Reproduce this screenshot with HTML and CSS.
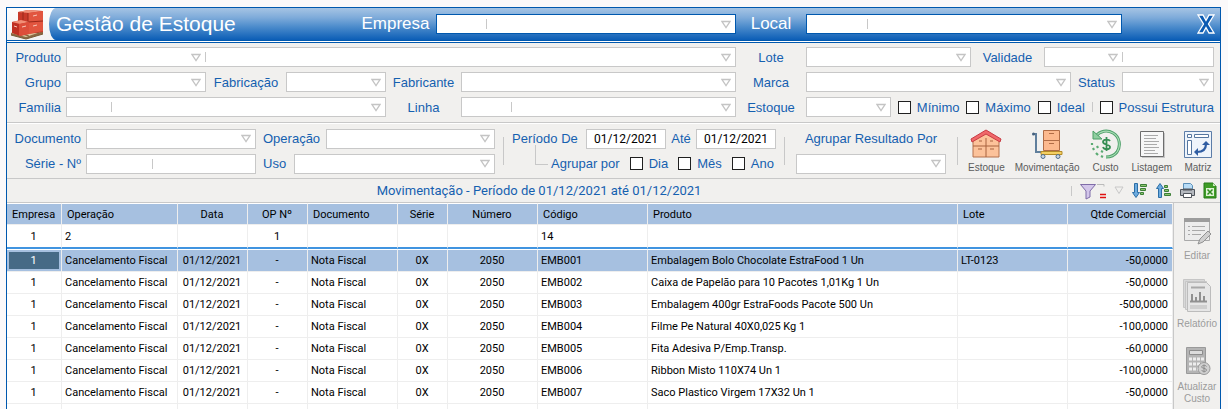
FILE: index.html
```html
<!DOCTYPE html>
<html lang="pt-BR">
<head>
    <meta charset="UTF-8">
    <meta name="viewport" content="width=device-width, initial-scale=1.0">
    <title>Gestão de Estoque</title>
    <link rel="stylesheet" href="styles.css">
</head>
<body>
    <div class="window">
        <header class="titlebar">
            <div class="logo">
                <svg width="36" height="32" viewBox="0 0 36 32">
                    <path d="M2 25l9-3 23 1v3l-17 5-15-4z" fill="#8a6a44"/>
                    <path d="M2 25l9-3 23 1-17 6z" fill="#e2c9a0"/>
                    <path d="M6 24l14 4M25 23l5 2M2 27l15 4 17-5" fill="none" stroke="#7a5a34"/>
                    <path d="M9 4l10-2 15 1v21l-15 2-10-3z" fill="#c83a2a"/>
                    <path d="M9 4l10-2 15 1-14 2z" fill="#f09078"/>
                    <path d="M19 5l15-2v20l-15 3z" fill="#e2553f"/>
                    <path d="M19 14l15-1M19 5v11M9 13l10 1M14 4v8" stroke="#98281a" fill="none"/>
                    <path d="M3 14l9-2 8 2v12l-9 2-8-3z" fill="#bf2f22"/>
                    <path d="M3 14l9-2 8 2-9 2z" fill="#f28f76"/>
                    <path d="M10 16l10-2v12l-10 2z" fill="#dd4d39"/>
                    <path d="M5 18l3 1M24 8l4-1M24 18l4-1M13 19l4-1" stroke="#f8c8ba"/>
                </svg>
            </div>
            <div class="title-fill">
                <h1>Gestão de Estoque</h1>
                <label for="empresa">Empresa</label>
                <div class="field">
                    <input class="w-code" type="text" id="empresa">
                    <span class="bar"></span>
                    <select aria-label="Nome da empresa"><option></option></select>
                </div>
                <label for="local">Local</label>
                <div class="field">
                    <input class="w-code-lg" type="text" id="local">
                    <span class="bar"></span>
                    <select aria-label="Nome do local"><option></option></select>
                </div>
                <button class="close" type="button" aria-label="Fechar">
                    <svg width="18" height="20" viewBox="0 0 18 20">
                        <path d="M1 1h5l3 5.500 3-5.500h5l-5.500 9 5.500 9h-5l-3-5.500-3 5.500h-5l5.500-9z" fill="#0a5ab2" stroke="#fff" stroke-width="1.300"/>
                    </svg>
                </button>
            </div>
        </header>

        <section class="filters">
            <label class="end" for="produto">Produto</label>
            <div class="field span-5">
                <select class="w-product" id="produto"><option></option></select>
                <span class="bar"></span>
                <select aria-label="Nome do produto"><option></option></select>
            </div>
            <label for="lote">Lote</label>
            <div class="line">
                <div class="field grow"><select id="lote"><option></option></select></div>
                <label class="w-validade" for="validade">Validade</label>
                <div class="field w-expiry">
                    <select class="w-date" id="validade"><option></option></select>
                    <span class="bar"></span>
                    <input type="text" aria-label="Data de validade">
                </div>
            </div>

            <label class="end" for="grupo">Grupo</label>
            <div class="field"><select id="grupo"><option></option></select></div>
            <label for="fabricacao">Fabricação</label>
            <div class="field"><select id="fabricacao"><option></option></select></div>
            <label for="fabricante">Fabricante</label>
            <div class="field"><select id="fabricante"><option></option></select></div>
            <label for="marca">Marca</label>
            <div class="line">
                <div class="field grow"><select id="marca"><option></option></select></div>
                <label class="w-status" for="status">Status</label>
                <div class="field w-state"><select id="status"><option></option></select></div>
            </div>

            <label class="end" for="familia">Família</label>
            <div class="field span-3">
                <input class="w-code-sm" type="text" id="familia">
                <span class="bar"></span>
                <select aria-label="Nome da família"><option></option></select>
            </div>
            <label for="linha">Linha</label>
            <div class="field">
                <input class="w-code" type="text" id="linha">
                <span class="bar"></span>
                <select aria-label="Nome da linha"><option></option></select>
            </div>
            <label for="estoque">Estoque</label>
            <div class="line checks">
                <div class="field w-stock"><select id="estoque"><option></option></select></div>
                <label class="check"><input type="checkbox">Mínimo</label>
                <label class="check"><input type="checkbox">Máximo</label>
                <label class="check"><input type="checkbox">Ideal</label>
                <span class="bar"></span>
                <label class="check"><input type="checkbox">Possui Estrutura</label>
            </div>
        </section>

        <section class="options">
            <div class="docs">
                <label class="end" for="documento">Documento</label>
                <div class="field"><select id="documento"><option></option></select></div>
                <div class="line">
                    <label class="start w-oper" for="operacao">Operação</label>
                    <div class="field grow"><select id="operacao"><option></option></select></div>
                </div>
                <label class="end" for="serie">Série - Nº</label>
                <div class="field">
                    <input class="w-serie" type="text" id="serie">
                    <span class="bar"></span>
                    <input type="text" aria-label="Número">
                </div>
                <div class="line">
                    <label class="start w-uso" for="uso">Uso</label>
                    <div class="field grow"><select id="uso"><option></option></select></div>
                </div>
            </div>

            <span class="divider"></span>

            <div class="period">
                <div class="line">
                    <label class="start w-period" for="de">Período De</label>
                    <div class="field date"><input type="text" id="de" value="01/12/2021"></div>
                    <label class="w-ate" for="ate">Até</label>
                    <div class="field date"><input type="text" id="ate" value="01/12/2021"></div>
                </div>
                <div class="line group-by">
                    <span class="elbow"></span>
                    <span class="text">Agrupar por</span>
                    <label class="check"><input type="checkbox">Dia</label>
                    <label class="check"><input type="checkbox">Mês</label>
                    <label class="check"><input type="checkbox">Ano</label>
                </div>
            </div>

            <span class="divider"></span>

            <div class="group-result">
                <label for="agrupar">Agrupar Resultado Por</label>
                <div class="field"><select id="agrupar"><option></option></select></div>
            </div>

            <span class="divider"></span>

            <nav class="views">
                <button type="button">
                    <svg width="32" height="30" viewBox="0 0 32 30">
                        <path d="M3 10L16 3l13 7v18H3z" fill="#fcc29a" stroke="#b4704c"/>
                        <path d="M3 17h26M16 17v11M16 9v8M8 20h4M20 20h4M9 12h3M20 12h3" stroke="#a8623e" fill="none"/>
                        <path d="M1 10L16 1l15 9-1 3-14-8L2 13z" fill="#f0686a" stroke="#c83c44"/>
                    </svg>
                    Estoque
                </button>
                <button type="button">
                    <svg width="32" height="30" viewBox="0 0 32 30">
                        <path d="M2 5h3v18h5" fill="none" stroke="#607f9c" stroke-width="2"/>
                        <circle cx="2.500" cy="5" r="1.500" fill="#45617e"/>
                        <path d="M12.500 1.500h16v10h-16zM12.500 11.500h16v10h-16z" fill="#fcb98e" stroke="#b06c46"/>
                        <path d="M18 4.500h5M18 14.500h5" stroke="#b06c46"/>
                        <path d="M10 22.500h21v3H10z" fill="#f4cf62" stroke="#b38b28"/>
                        <circle cx="12" cy="27.500" r="2" fill="#cbd7e4" stroke="#4f6e8c"/>
                        <circle cx="27" cy="27.500" r="2" fill="#cbd7e4" stroke="#4f6e8c"/>
                    </svg>
                    Movimentação
                </button>
                <button type="button">
                    <svg width="32" height="30" viewBox="0 0 32 30">
                        <path d="M6 7C10 2 17 .500 23 4c7 4 8 13 4 19-3 4-7 5-11 5" fill="none" stroke="#4b9f67" stroke-width="3"/>
                        <path d="M6 7C10 2 17 .500 23 4c7 4 8 13 4 19-3 4-7 5-11 5" fill="none" stroke="#a8dab4" stroke-width="1.200"/>
                        <path d="M3 2v8h9z" fill="#8fce9f" stroke="#4b9f67"/>
                        <path d="M2 14v2M3 19l1 2M6 24l2 2M11 27l2 1M7 17l1 2M11 22l2 1" stroke="#5aaa72" stroke-width="2.200"/>
                        <path d="M20 12c-1-2-7-2-7 1s7 2 7 5-6 3-7 0M16.500 8v14" fill="none" stroke="#368e54" stroke-width="1.800"/>
                    </svg>
                    Custo
                </button>
                <button type="button">
                    <svg width="32" height="30" viewBox="0 0 32 30">
                        <path d="M6 4h23v25H6z" fill="#c7c7c7"/>
                        <path d="M4.500 2.500h23v25h-23z" fill="#f7f7f7" stroke="#6d6d6d"/>
                        <path d="M8 6.500h14M8 9.500h12M8 12.500h15M8 15.500h13M8 18.500h15M8 21.500h11M8 24.500h14" stroke="#aaa"/>
                    </svg>
                    Listagem
                </button>
                <button type="button">
                    <svg width="32" height="30" viewBox="0 0 32 30">
                        <path d="M2.500 2.500h27v26h-27z" fill="#eef4fb" stroke="#5c7da8"/>
                        <path d="M5.500 5.500h4v3h-4zM12.500 5.500h14v3h-14zM5.500 11.500h4v14h-4z" fill="#fff" stroke="#55769f"/>
                        <path d="M15 23c6 0 9-3 9-8" fill="none" stroke="#2f5da3" stroke-width="2.200"/>
                        <path d="M20 16l4-4 4 4zM16 19l-4 4 4 4z" fill="#2f5da3"/>
                    </svg>
                    Matriz
                </button>
            </nav>
        </section>

        <div class="toolbar">
            <h2>Movimentação - Período de 01/12/2021 até 01/12/2021</h2>
            <div class="tools">
                <span class="bar"></span>
                <button type="button" aria-label="Filtrar">
                    <svg width="28" height="18" viewBox="0 0 28 18">
                        <path d="M1.500 2.500h15L11 9v6l-4 2V9z" fill="#d3c6ea" stroke="#7f6ca8"/>
                        <path d="M18 2.500h7v2" fill="none" stroke="#bbb"/>
                        <path d="M21 12.500h6M21 15.500h6" stroke="#e01010" stroke-width="1.500"/>
                    </svg>
                </button>
                <button type="button" aria-label="Mais filtros">
                    <svg width="10" height="9" viewBox="0 0 10 9">
                        <path d="M1 1h8L5 7.500z" fill="none" stroke="#c8c8c8"/>
                    </svg>
                </button>
                <button type="button" aria-label="Ordem decrescente">
                    <svg width="17" height="17" viewBox="0 0 17 17">
                        <path d="M3.500 1.500h3v9h2L5 15.500 1.500 10.500h2z" fill="#6cabdf" stroke="#2c6ea6"/>
                        <path d="M9.500 2.500h6v2h-6zM9.500 6.500h5v2h-5zM9.500 10.500h3v2h-3z" fill="#8cc56c" stroke="#3d7f38"/>
                    </svg>
                </button>
                <button type="button" aria-label="Ordem crescente">
                    <svg width="17" height="17" viewBox="0 0 17 17">
                        <path d="M3.500 15.500h3v-9h2L5 1.500 1.500 6.500h2z" fill="#6cabdf" stroke="#2c6ea6"/>
                        <path d="M9.500 3.500h3v2h-3zM9.500 7.500h4v2h-4zM9.500 11.500h6v2h-6z" fill="#8cc56c" stroke="#3d7f38"/>
                    </svg>
                </button>
                <button type="button" aria-label="Imprimir">
                    <svg width="17" height="17" viewBox="0 0 17 17">
                        <path d="M4.500 1.500h7l2 2v5h-9z" fill="#b8dcf6" stroke="#5b8fb8"/>
                        <path d="M1.500 7.500h14v6h-14z" fill="#b4b8be" stroke="#50555c"/>
                        <path d="M4 7.500h9" stroke="#50555c" stroke-width="2"/>
                        <path d="M4.500 11.500h8v4h-8z" fill="#fff" stroke="#50555c"/>
                    </svg>
                </button>
                <button type="button" aria-label="Exportar para Excel">
                    <svg width="14" height="17" viewBox="0 0 14 17">
                        <path d="M1 1h9l3 3v12H1z" fill="#3f9c26" stroke="#267a18"/>
                        <path d="M10 1v3h3z" fill="#c9e8bc"/>
                        <path d="M3 6h8v8H3z" fill="#dff2d6"/>
                        <path d="M4.500 7.500l5 5M9.500 7.500l-5 5" stroke="#2f8c1c" stroke-width="1.500"/>
                    </svg>
                </button>
            </div>
        </div>

        <main class="content">
            <div class="grid-wrap">
                <table class="grid">
                    <colgroup>
                        <col class="c-emp"><col class="c-oper"><col class="c-data"><col class="c-op">
                        <col class="c-doc"><col class="c-serie"><col class="c-num"><col class="c-cod">
                        <col><col class="c-lote"><col class="c-qtde">
                    </colgroup>
                    <thead>
                        <tr class="heads">
                            <th class="mid">Empresa</th><th>Operação</th><th class="mid">Data</th><th class="mid">OP Nº</th>
                            <th>Documento</th><th class="mid">Série</th><th class="mid">Número</th><th>Código</th>
                            <th>Produto</th><th>Lote</th><th class="num">Qtde Comercial</th>
                        </tr>
                        <tr class="search">
                            <td class="mid"><input type="text" value="1" aria-label="Filtrar empresa"></td>
                            <td><input type="text" value="2" aria-label="Filtrar operação"></td>
                            <td><input type="text" aria-label="Filtrar data"></td>
                            <td class="mid"><input type="text" value="1" aria-label="Filtrar OP"></td>
                            <td><input type="text" aria-label="Filtrar documento"></td>
                            <td><input type="text" aria-label="Filtrar série"></td>
                            <td><input type="text" aria-label="Filtrar número"></td>
                            <td><input type="text" value="14" aria-label="Filtrar código"></td>
                            <td><input type="text" aria-label="Filtrar produto"></td>
                            <td><input type="text" aria-label="Filtrar lote"></td>
                            <td><input type="text" aria-label="Filtrar quantidade"></td>
                        </tr>
                    </thead>
                    <tbody>
                        <tr class="selected"><td class="mid current">1</td><td>Cancelamento Fiscal</td><td class="mid">01/12/2021</td><td class="mid">-</td><td>Nota Fiscal</td><td class="mid">0X</td><td class="mid">2050</td><td>EMB001</td><td>Embalagem Bolo Chocolate EstraFood 1 Un</td><td>LT-0123</td><td class="num">-50,0000</td></tr>
                        <tr><td class="mid">1</td><td>Cancelamento Fiscal</td><td class="mid">01/12/2021</td><td class="mid">-</td><td>Nota Fiscal</td><td class="mid">0X</td><td class="mid">2050</td><td>EMB002</td><td>Caixa de Papelão para 10 Pacotes 1,01Kg 1 Un</td><td></td><td class="num">-50,0000</td></tr>
                        <tr><td class="mid">1</td><td>Cancelamento Fiscal</td><td class="mid">01/12/2021</td><td class="mid">-</td><td>Nota Fiscal</td><td class="mid">0X</td><td class="mid">2050</td><td>EMB003</td><td>Embalagem 400gr EstraFoods Pacote 500 Un</td><td></td><td class="num">-500,0000</td></tr>
                        <tr><td class="mid">1</td><td>Cancelamento Fiscal</td><td class="mid">01/12/2021</td><td class="mid">-</td><td>Nota Fiscal</td><td class="mid">0X</td><td class="mid">2050</td><td>EMB004</td><td>Filme Pe Natural 40X0,025 Kg 1</td><td></td><td class="num">-100,0000</td></tr>
                        <tr><td class="mid">1</td><td>Cancelamento Fiscal</td><td class="mid">01/12/2021</td><td class="mid">-</td><td>Nota Fiscal</td><td class="mid">0X</td><td class="mid">2050</td><td>EMB005</td><td>Fita Adesiva P/Emp.Transp.</td><td></td><td class="num">-60,0000</td></tr>
                        <tr><td class="mid">1</td><td>Cancelamento Fiscal</td><td class="mid">01/12/2021</td><td class="mid">-</td><td>Nota Fiscal</td><td class="mid">0X</td><td class="mid">2050</td><td>EMB006</td><td>Ribbon Misto 110X74 Un 1</td><td></td><td class="num">-100,0000</td></tr>
                        <tr><td class="mid">1</td><td>Cancelamento Fiscal</td><td class="mid">01/12/2021</td><td class="mid">-</td><td>Nota Fiscal</td><td class="mid">0X</td><td class="mid">2050</td><td>EMB007</td><td>Saco Plastico Virgem 17X32 Un 1</td><td></td><td class="num">-50,0000</td></tr>
                        <tr><td></td><td></td><td></td><td></td><td></td><td></td><td></td><td></td><td></td><td></td><td></td></tr>
                    </tbody>
                </table>
            </div>

            <aside class="actions">
                <button type="button">
                    <svg width="28" height="28" viewBox="0 0 28 28">
                        <path d="M1.500 1.500h25v22h-25z" fill="#ececec" stroke="#a9a9a9"/>
                        <path d="M1 1h26v4H1z" fill="#9c9c9c"/>
                        <path d="M5 9.500h2M5 13.500h2M5 17.500h2M9 9.500h13M9 13.500h13M9 17.500h9" stroke="#a9a9a9"/>
                        <path d="M15 27l2-5 8-8 3 3-8 8z" fill="#cfcfcf" stroke="#929292"/>
                    </svg>
                    Editar
                </button>
                <button type="button">
                    <svg width="30" height="35" viewBox="0 0 30 35">
                        <path d="M1.500 1.500h21v28h-21z" fill="#d8d8d8" stroke="#c6c6c6"/>
                        <path d="M3.500 3.500h21v28h-21z" fill="#dedede" stroke="#c6c6c6"/>
                        <path d="M5.500 4.500h19l4 4v25h-23z" fill="#e6e6e6" stroke="#bcbcbc"/>
                        <path d="M9 9.500h14" stroke="#a8a8a8" stroke-width="2"/>
                        <path d="M10 23v-7M14 23v-4M18 23v-9M22 23v-5M8 23.500h17" stroke="#909090" stroke-width="2"/>
                        <path d="M8 27h17v4H8z" fill="#cfcfcf"/>
                    </svg>
                    Relatório
                </button>
                <button type="button">
                    <svg width="28" height="30" viewBox="0 0 28 30">
                        <path d="M3.500 1.500h19v26h-19z" fill="#b4b4b4" stroke="#9a9a9a"/>
                        <path d="M6.500 4.500h13v4h-13z" fill="#dcdcdc" stroke="#8d8d8d"/>
                        <path d="M6 13h15M6 18h15M6 23h15" stroke="#ededed" stroke-width="3" stroke-dasharray="3 1"/>
                        <circle cx="21" cy="22.500" r="6" fill="#d0d0d0" stroke="#989898"/>
                        <path d="M23.500 20.500c-1-2-5-1-5 .500s5 1 5 3-4 2-5 0M21 18.500v8" fill="none" stroke="#8a8a8a"/>
                    </svg>
                    Atualizar Custo
                </button>
            </aside>
        </main>
    </div>
</body>
</html>
```

FILE: styles.css
```css
:root {
    --page: #fbf9fa;
    --panel: #f1f0ee;
    --blue: #0058ae;
    --label: #1560b0;
    --line: #c8c8c8;
    --head: #a6c0e0;
    --grid-line: #eeeeee;
}

* {
    margin: 0;
    padding: 0;
    box-sizing: border-box;
}

body {
    background: var(--page);
    font-family: "Liberation Sans", Arial, sans-serif;
    font-size: 13px;
    color: var(--label);
    height: 100vh;
    padding: 7px 7px 0 6px;
    overflow: hidden;
}

button {
    background: none;
    border: none;
    font: inherit;
    color: inherit;
    cursor: pointer;
}

svg {
    display: block;
}

.window {
    height: 100%;
    display: flex;
    flex-direction: column;
    background: var(--panel);
    border: 1px solid var(--blue);
    border-bottom: none;
}

/* Title bar */
.titlebar {
    display: flex;
    height: 35px;
    flex: none;
    background: linear-gradient(#fdfdfd, #f1f1f1);
    border-bottom: 1px solid var(--blue);
    box-shadow: inset 0 -1px #ffffff, inset 0 -2px var(--blue);
    padding-bottom: 2px;
}

.logo {
    width: 42px;
    padding-left: 2px;
}

.title-fill {
    flex: 1;
    display: grid;
    grid-template-columns: 306fr 81px 300fr 70px 316fr 98px;
    align-items: center;
    background: linear-gradient(#a6c4e4, #7eabda 30%, #4a8acb 60%, #0b5db6);
    border-radius: 7px 0 0 7px / 16px 0 0 16px;
}

.title-fill h1 {
    font-size: 21px;
    font-weight: 400;
    color: #ffffff;
    padding-left: 7px;
    white-space: nowrap;
}

.title-fill label {
    font-size: 17px;
    color: #ffffff;
    text-align: center;
}

.title-fill .field {
    border-color: var(--blue);
}

.close {
    justify-self: end;
    padding-right: 5px;
}

/* Fields */
.field {
    display: flex;
    align-items: center;
    height: 20px;
    min-width: 0;
    background: #ffffff;
    border: 1px solid var(--line);
}

.field input,
.field select {
    flex: 1;
    min-width: 0;
    width: 0;
    height: 18px;
    border: none;
    outline: none;
    background: transparent;
    font-family: Roboto, sans-serif;
    font-size: 12px;
    color: #000000;
}

.field select {
    appearance: none;
    background: url("data:image/svg+xml,%3Csvg xmlns='http://www.w3.org/2000/svg' width='10' height='9'%3E%3Cpath d='M1 1.500h8L5 7.500z' fill='none' stroke='%23c4c4c4' stroke-width='1.300'/%3E%3C/svg%3E") no-repeat right 4px center;
}

.bar {
    flex: none;
    width: 1px;
    height: 10px;
    background: var(--line);
}

.field .w-code {
    flex: 0 0 49px;
}

.field .w-code-sm {
    flex: 0 0 44px;
}

.field .w-code-lg {
    flex: 0 0 60px;
}

.field .w-serie {
    flex: 0 0 65px;
}

.field .w-product {
    flex: 0 0 138px;
}

.field .w-date {
    flex: 0 0 77px;
}

label {
    text-align: center;
    white-space: nowrap;
}

.end {
    text-align: right;
    padding-right: 5px;
}

.start {
    text-align: left;
}

.line {
    display: flex;
    align-items: center;
    min-width: 0;
}

.grow {
    flex: 1;
}

.check {
    display: flex;
    align-items: center;
    gap: 6px;
}

.check input {
    appearance: none;
    width: 13px;
    height: 13px;
    background: #ffffff;
    border: 1px solid #202020;
}

.check input:checked {
    background: var(--blue);
}

/* Product filters */
.filters {
    display: grid;
    grid-template-columns: 59px 140fr 80px 100fr 75px 275fr 70px 408fr;
    row-gap: 5px;
    align-items: center;
    padding: 4px 6px 5px 0;
    border-bottom: 1px solid var(--line);
}

.span-3 {
    grid-column: span 3;
}

.span-5 {
    grid-column: span 5;
}

.w-validade {
    width: 73px;
}

.w-expiry {
    width: 170px;
}

.w-status {
    width: 51px;
}

.w-state {
    width: 92px;
}

.w-stock {
    width: 85px;
}

.checks {
    justify-content: space-between;
}

/* Document, period and grouping options */
.options {
    display: flex;
    align-items: center;
    height: 56px;
    flex: none;
    border-top: 1px solid #ffffff;
    border-bottom: 1px solid var(--line);
}

.docs {
    flex: 1;
    display: grid;
    grid-template-columns: 79px 170fr 239fr;
    row-gap: 5px;
    align-items: center;
}

.docs .line {
    padding-left: 7px;
}

.w-oper {
    width: 63px;
}

.w-uso {
    width: 31px;
}

.divider {
    width: 1px;
    height: 28px;
    margin: 0 8px;
    background: var(--line);
}

.period {
    display: grid;
    row-gap: 5px;
}

.period .line {
    height: 20px;
}

.w-period {
    width: 74px;
}

.w-ate {
    width: 30px;
}

.date {
    width: 80px;
}

.date input {
    text-align: center;
}

.group-by {
    padding-left: 23px;
}

.group-by .check {
    margin-left: 10px;
}

.elbow {
    width: 13px;
    height: 20px;
    align-self: flex-start;
    margin: -9px 3px 0 0;
    border-left: 1px solid var(--line);
    border-bottom: 1px solid var(--line);
}

.group-result {
    display: grid;
    width: 150px;
    margin: 0 3px;
    row-gap: 5px;
}

.group-result label {
    line-height: 20px;
}

.views {
    display: flex;
    justify-content: space-between;
    width: 254px;
    padding: 0 6px 0 2px;
}

.views button {
    display: flex;
    flex-direction: column;
    align-items: center;
    gap: 3px;
    font-size: 10px;
    color: #5c5c5c;
}

/* Toolbar */
.toolbar {
    display: flex;
    align-items: center;
    height: 24px;
    flex: none;
    border-bottom: 1px solid var(--line);
}

.toolbar h2 {
    flex: 1;
    text-align: center;
    font-family: Roboto, sans-serif;
    font-size: 13px;
    font-weight: 400;
}

.tools {
    display: flex;
    align-items: center;
    gap: 7px;
    padding-right: 3px;
}

/* Data grid */
.content {
    flex: 1;
    min-height: 0;
    display: flex;
    overflow: hidden;
}

.grid-wrap {
    flex: 1;
    min-width: 0;
    overflow: hidden;
    background: #ffffff;
}

.grid {
    width: 100%;
    table-layout: fixed;
    border-collapse: separate;
    border-spacing: 0;
    font-family: Roboto, sans-serif;
    font-size: 11px;
    color: #000000;
}

.grid th,
.grid td {
    height: 22px;
    padding: 0 4px 0 3px;
    font-weight: 400;
    text-align: left;
    white-space: nowrap;
    overflow: hidden;
    border-right: 1px solid var(--grid-line);
    border-bottom: 1px solid var(--grid-line);
}

.grid .heads th {
    background: var(--head);
    padding: 0 6px 0 5px;
    border-top: 1px solid #ffffff;
}

.grid .search td {
    height: 24px;
    border-bottom: 2px solid #4094e0;
}

.grid input {
    width: 100%;
    border: none;
    outline: none;
    background: transparent;
    font: inherit;
    color: inherit;
    text-align: inherit;
}

.grid .mid {
    text-align: center;
}

.grid .num {
    text-align: right;
}

.grid .selected td {
    height: 23px;
    background: var(--head);
    border-top: 1px solid #ffffff;
}

.grid .selected .current {
    background: #466a86;
    color: #ffffff;
    box-shadow: inset 0 0 0 2px var(--head);
}

.c-emp {
    width: 55px;
}

.c-oper {
    width: 116px;
}

.c-data {
    width: 70px;
}

.c-op {
    width: 60px;
}

.c-doc,
.c-num {
    width: 90px;
}

.c-serie {
    width: 50px;
}

.c-cod,
.c-lote {
    width: 110px;
}

.c-qtde {
    width: 105px;
}

/* Side actions */
.actions {
    width: 47px;
    display: flex;
    flex-direction: column;
    align-items: center;
    gap: 16px;
    padding-top: 14px;
    border-left: 1px solid var(--line);
}

.actions button {
    display: flex;
    flex-direction: column;
    align-items: center;
    gap: 5px;
    font-size: 10px;
    line-height: 12px;
    color: #9c9c9c;
}
```
